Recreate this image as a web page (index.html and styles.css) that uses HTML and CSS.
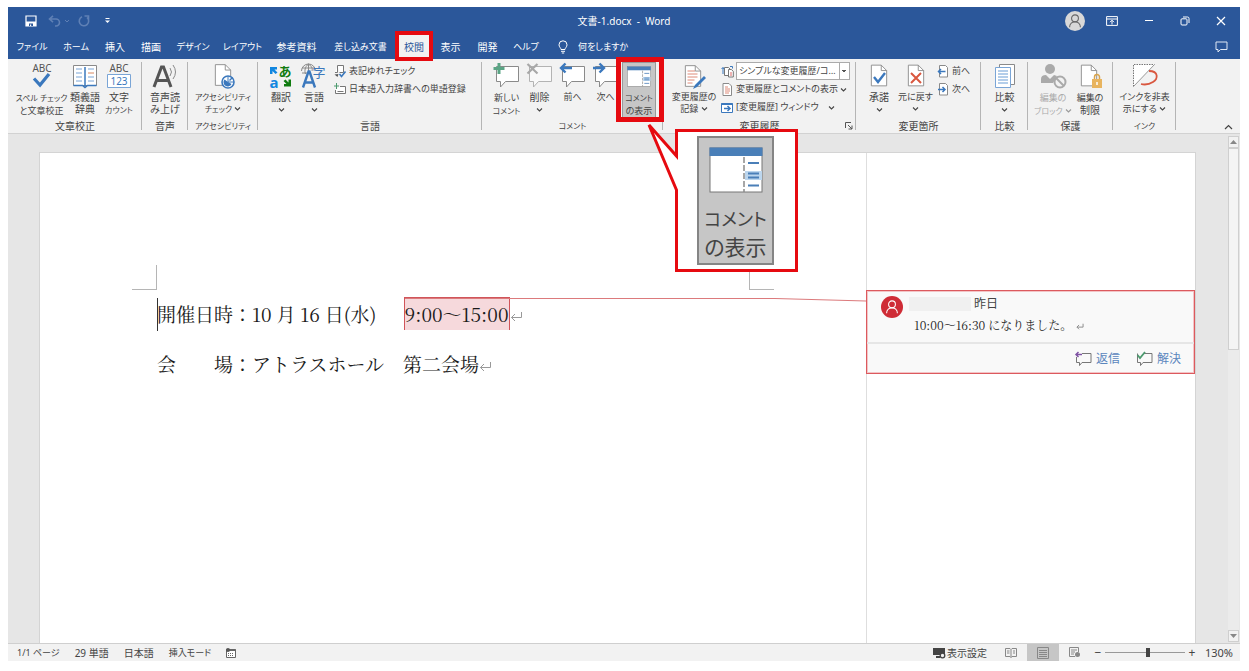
FILE: index.html
```html
<!DOCTYPE html>
<html lang="ja">
<head>
<meta charset="utf-8">
<title>文書-1.docx - Word</title>
<link rel="stylesheet" href="styles.css">
</head>
<body>
<svg class="defs" width="0" height="0" aria-hidden="true">
  <defs>
    <symbol id="chev" viewBox="0 0 7 7"><path d="M1 2.5 3.5 5 6 2.5" fill="none" stroke="#444" stroke-width="1.1"/></symbol>
    <symbol id="page" viewBox="0 0 20 26"><path d="M1.5 1.500h11l6 6v17h-17z" fill="#fff" stroke="#8a8a8a"/><path d="M12.500 1.500v6h6" fill="none" stroke="#8a8a8a"/></symbol>
    <symbol id="bubble" viewBox="0 0 28 28"><path d="M3.500 4.500h22v15h-13l-5 5.500v-5.500h-4z" fill="#fff" stroke="#8a8a8a"/></symbol>
    <symbol id="person" viewBox="0 0 20 20"><circle cx="10" cy="7" r="3.800" fill="none" stroke="currentColor" stroke-width="1.200"/><path d="M4 17c0-8 12-8 12 0" fill="none" stroke="currentColor" stroke-width="1.200"/></symbol>
    <symbol id="pane" viewBox="0 0 54 46"><rect x="1" y="1" width="52" height="44" fill="#fff" stroke="#777"/><path d="M.5.500h53v8.500h-53z" fill="#4a7fb8"/><path d="M35 10v35" stroke="#8a8a8a" stroke-width="1.500" stroke-dasharray="6 2"/><path d="M36 24h17v9h-17z" fill="#bcd6ee"/><path d="M39 16h11M39 26.500h11M39 30.500h11M39 38.500h11" stroke="#4a7fb8" stroke-width="1.800"/></symbol>
  </defs>
</svg>
<div class="window">
  <header class="titlebar">
    <div class="quick">
      <button aria-label="上書き保存"><svg width="12" height="12" viewBox="0 0 12 12"><path d="M1 1h10v10H1z" fill="none" stroke="#fff" stroke-width="1.200"/><path d="M1 6.500h10V11H1z" fill="#fff"/><path d="M4 8.500h4V11H4z" fill="#2b579a"/><path d="M5 9.500h1.200V11H5z" fill="#fff"/></svg></button>
      <button class="dim" aria-label="元に戻す"><svg width="22" height="12" viewBox="0 0 22 12"><path d="M5 .8 1.500 4 5 7.200M2 4h6a3.500 3.500 0 0 1 0 7H7" fill="none" stroke="currentColor" stroke-width="1.600"/><path d="m17 5 2 2 2-2" fill="none" stroke="currentColor"/></svg></button>
      <button class="dim" aria-label="やり直し"><svg width="12" height="12" viewBox="0 0 12 12"><path d="M4 1.800A4.700 4.700 0 1 0 9 2.500M6.500 1h4v4" fill="none" stroke="currentColor" stroke-width="1.600"/></svg></button>
      <button class="more" aria-label="クイック アクセスのカスタマイズ"><svg width="5" height="6" viewBox="0 0 5 6"><path d="M.5.500h4" stroke="#fff"/><path d="M0 2.500h5L2.500 5z" fill="#fff"/></svg></button>
    </div>
    <h1 class="doc-title">文書-1.docx&nbsp; -&nbsp; Word</h1>
    <div class="controls">
      <button class="avatar" aria-label="アカウント"><svg width="18" height="18"><use href="#person"/></svg></button>
      <button aria-label="リボンの表示オプション"><svg width="12" height="10" viewBox="0 0 12 10"><path d="M.6.600h10.800v8.800H.6zM.6 3h10.800" fill="none" stroke="#fff"/><path d="M6 8.500V4.500M4 6.200l2-2 2 2" fill="none" stroke="#fff"/></svg></button>
      <button aria-label="最小化"><svg width="10" height="10" viewBox="0 0 10 10"><path d="M1 4.500h8" stroke="#fff"/></svg></button>
      <button aria-label="元のサイズ"><svg width="10" height="10" viewBox="0 0 10 10"><rect x="1" y="2.800" width="6" height="6.200" rx="1" fill="none" stroke="#fff"/><path d="M3 1h4.500Q9 1 9 2.500V7" fill="none" stroke="#fff"/></svg></button>
      <button aria-label="閉じる"><svg width="10" height="10" viewBox="0 0 10 10"><path d="m1 1 8 8M9 1 1 9" stroke="#fff" stroke-width="1.200"/></svg></button>
    </div>
  </header>
  <nav class="tabs">
    <button class="small">ファイル</button><button class="small">ホーム</button><button>挿入</button><button>描画</button><button class="small">デザイン</button><button class="small">レイアウト</button><button>参考資料</button><button class="small">差し込み文書</button><button class="active">校閲</button><button>表示</button><button>開発</button><button class="small">ヘルプ</button>
    <button class="tell small"><svg width="10" height="14" viewBox="0 0 10 14"><path d="M3 9.500C3 8 1 7 1 4.800a4 4 0 0 1 8 0C9 7 7 8 7 9.500zM3 11.300h4M3.800 13h2.400" fill="none" stroke="#fff"/></svg>何をしますか</button>
    <button class="notes" aria-label="コメント"><svg width="13" height="12" viewBox="0 0 13 12"><path d="M1 1h11v7.500H5.500L3 11V8.500H1z" fill="none" stroke="#dfe8f5"/></svg></button>
  </nav>
  <section class="ribbon" aria-label="校閲">
    <div class="group proof">
      <div class="tools">
        <button class="tool"><svg width="28" height="28" viewBox="0 0 28 28"><text x="14" y="10" text-anchor="middle" class="abc">ABC</text><path d="m6 16.500 6 6.500 9-11" fill="none" stroke="#3b78bd" stroke-width="3.200"/></svg><span><b class="tiny">スペル チェック</b><br><b class="small">と文章校正</b></span></button>
        <button class="tool"><svg width="28" height="28" viewBox="0 0 28 28"><path d="M2.500 3.500h23v20h-23z" fill="#fff" stroke="#8a8a8a"/><path d="M14 5v19.500" stroke="#3b78bd" stroke-width="1.500"/><path d="M2.500 23.500h9l2.500 2 2.500-2h9" fill="none" stroke="#3b78bd" stroke-width="1.500"/><path d="M5 7h6M5 11h6M5 15h6M5 19h6M17 7h6M17 15h6M17 19h6" stroke="#7aa5d6"/><path d="M17 11h6" stroke="#d98860"/></svg><span>類義語<br>辞典</span></button>
        <button class="tool"><svg width="28" height="28" viewBox="0 0 28 28"><text x="14" y="10" text-anchor="middle" class="abc">ABC</text><path d="M2.500 12.500h23v13h-23z" fill="#fff" stroke="#7aa5d6"/><text x="14" y="23" text-anchor="middle" class="num">123</text></svg><span>文字<br><b class="tiny">カウント</b></span></button>
      </div>
      <h2>文章校正</h2>
    </div>
    <div class="group voice">
      <div class="tools">
        <button class="tool"><svg width="28" height="28" viewBox="0 0 28 28"><path d="m3 25 7.500-20h2L20 25M6 18.500h11" fill="none" stroke="#555" stroke-width="3"/><path d="M19 6q3 4 0 8M22 3q5 7 0 14" fill="none" stroke="#8a8a8a"/></svg><span>音声読<br>み上げ</span></button>
      </div>
      <h2>音声</h2>
    </div>
    <div class="group access">
      <div class="tools">
        <button class="tool"><svg width="28" height="28" viewBox="0 0 28 28"><use href="#page" x="5" y="1" width="18" height="24"/><circle cx="19" cy="20" r="6" fill="#fff" stroke="#3b78bd" stroke-width="1.600"/><path d="M19 20V14.500M19 20h5.500" stroke="#3b78bd"/><path d="M15.500 17.500a4.200 4.200 0 1 0 7 4.500L19 20z" fill="#3b78bd"/><path d="m20.500 18.500 3-3" stroke="#3b78bd" stroke-width="1.500"/></svg><span class="tiny">アクセシビリティ<br>チェック <svg class="chev"><use href="#chev"/></svg></span></button>
      </div>
      <h2 class="tiny">アクセシビリティ</h2>
    </div>
    <div class="group lang">
      <div class="tools">
        <button class="tool"><svg width="28" height="28" viewBox="0 0 28 28"><path d="M3 5h7v2.500H7.500l3 3-2 1.500-3-3V12H3z" fill="#1287e0"/><text x="18" y="14" text-anchor="middle" class="kana">あ</text><text x="7" y="26" text-anchor="middle" class="latin">a</text><path d="M24 24.500h-7V22h2.500l-3-3 2-1.500 3 3v-3H24z" fill="#107c10"/></svg><span>翻訳<br><svg class="chev"><use href="#chev"/></svg></span></button>
        <button class="tool"><svg width="28" height="28" viewBox="0 0 28 28"><path d="M1.500 9a7 7 0 0 1 14 0M2 6h13M2 11h6M8.500 2v10M8.500 2c-4 3-4 7-3 10M8.500 2c4 3 4 5 3.500 7" fill="none" stroke="#8a8a8a"/><text x="19" y="15" text-anchor="middle" class="ji">字</text><path d="m3 25.500 5.500-16h1l5.500 16M5 20.500h8" fill="none" stroke="#3b78bd" stroke-width="2.400"/></svg><span>言語<br><svg class="chev"><use href="#chev"/></svg></span></button>
        <div class="list small">
          <button class="row"><svg width="12" height="13" viewBox="0 0 12 13"><path d="M3.500.500h6v7h-4M3.500.500v7H1" fill="#fff" stroke="#777"/><path d="m.5 9.500 3 2.500 1-3z" fill="#555"/><path d="m5.500 9 2 2.500 4-5" fill="none" stroke="#3b78bd" stroke-width="1.600"/></svg>表記ゆれチェック</button>
          <button class="row"><svg width="12" height="13" viewBox="0 0 12 13"><path d="M6 3.500h5.500v7H1.500V7" fill="#fff" stroke="#777"/><path d="M2.500 0v6M0 3h5" stroke="#4c9a6e"/><path d="M3.500 8.500h6" stroke="#777"/></svg>日本語入力辞書への単語登録</button>
        </div>
      </div>
      <h2>言語</h2>
    </div>
    <div class="group comment">
      <div class="tools">
        <button class="tool"><svg width="28" height="28" viewBox="0 0 28 28"><use href="#bubble" width="28" height="28"/><path d="M6 1v11M.5 6.500h11" stroke="#5ba585" stroke-width="3"/></svg><span><b class="small">新しい</b><br><b class="tiny">コメント</b></span></button>
        <button class="tool"><svg width="28" height="28" viewBox="0 0 28 28" opacity=".6"><use href="#bubble" width="28" height="28"/><path d="m1.500 2 10 9.500M11.500 2l-10 9.500" stroke="#777" stroke-width="2.200"/></svg><span>削除<br><svg class="chev"><use href="#chev"/></svg></span></button>
        <button class="tool"><svg width="28" height="28" viewBox="0 0 28 28"><use href="#bubble" width="28" height="28"/><path d="M13 6H2M6.500 1.500 2 6l4.500 4.500" fill="none" stroke="#3b78bd" stroke-width="2.400"/></svg><span class="small">前へ</span></button>
        <button class="tool"><svg width="28" height="28" viewBox="0 0 28 28"><use href="#bubble" width="28" height="28"/><path d="M1 6h11M7.500 1.500 12 6l-4.500 4.500" fill="none" stroke="#3b78bd" stroke-width="2.400"/></svg><span class="small">次へ</span></button>
        <button class="tool pressed" aria-pressed="true"><svg width="28" height="28" viewBox="0 0 28 28"><use href="#pane" x="2" y="4" width="24" height="21"/></svg><span><b class="tiny">コメント</b><br><b class="small">の表示</b></span></button>
      </div>
      <h2 class="tiny">コメント</h2>
    </div>
    <div class="group track">
      <div class="tools">
        <button class="tool"><svg width="28" height="28" viewBox="0 0 28 28"><use href="#page" x="4" y="2" width="18" height="24"/><path d="M7.500 9H15M7.500 12h10M7.500 15h10M7.500 18h7M7.500 21h5" stroke="#de8a78"/><path d="m24 14-9 9-2 4 4-2 9-9z" fill="#3b78bd"/></svg><span class="small">変更履歴の<br>記録 <svg class="chev"><use href="#chev"/></svg></span></button>
        <div class="list small">
          <div class="row"><svg width="13" height="13" viewBox="0 0 13 13"><path d="M3.500 2.500h4l2 2v6h-6z" fill="#fff" stroke="#777"/><path d="M7.500 4.500h3l1.800 2v5.500H7.500z" fill="#fff" stroke="#777"/><path d="M9 8h2M9 10h2" stroke="#d66"/><path d="M2 9V2.500L.5 4M2 2.500 3 4M9 1.500h2.500v2" fill="none" stroke="#3b78bd"/></svg><select class="markup" aria-label="変更内容の表示"><option>シンプルな変更履歴/コ…</option></select></div>
          <button class="row"><svg width="13" height="13" viewBox="0 0 13 13"><path d="M2 .5h6l2.500 2.500v9.500H2z" fill="#fff" stroke="#8a8a8a"/><path d="M4 4h3M4 6h5M4 8h5M4 10h4" stroke="#de8a78"/></svg>変更履歴とコメントの表示 <svg class="chev"><use href="#chev"/></svg></button>
          <button class="row"><svg width="13" height="13" viewBox="0 0 13 13"><path d="M.5 2.500h11v9H.5z" fill="#fff" stroke="#3b78bd"/><path d="M.5 3h11" stroke="#3b78bd" stroke-width="2"/><path d="M3 7.500h6M6.500 5 9 7.500 6.500 10" fill="none" stroke="#3b78bd" stroke-width="1.500"/></svg>[変更履歴] ウィンドウ&nbsp; &nbsp;<svg class="chev"><use href="#chev"/></svg></button>
        </div>
      </div>
      <h2>変更履歴</h2>
      <button class="launcher" aria-label="変更履歴オプション"><svg width="8" height="8" viewBox="0 0 8 8"><path d="M.5 6V.5H6M3 3l4 4M7 3.500V7H3.500" fill="none" stroke="#555"/></svg></button>
    </div>
    <div class="group changes">
      <div class="tools">
        <button class="tool"><svg width="28" height="28" viewBox="0 0 28 28"><use href="#page" x="5" y="1" width="18" height="25"/><path d="m9 15 4 5 7-9" fill="none" stroke="#3b78bd" stroke-width="2.400"/></svg><span>承諾<br><svg class="chev"><use href="#chev"/></svg></span></button>
        <button class="tool"><svg width="28" height="28" viewBox="0 0 28 28"><use href="#page" x="5" y="1" width="18" height="25"/><path d="m9 11 10 10M19 11 9 21" stroke="#d9573f" stroke-width="2"/></svg><span class="small">元に戻す<br><svg class="chev"><use href="#chev"/></svg></span></button>
        <div class="list small">
          <button class="row"><svg width="12" height="13" viewBox="0 0 12 13"><path d="M2.500.500h6l2 2v9.500h-8z" fill="#fff" stroke="#8a8a8a"/><path d="M8.500 6.500H1.500M4 4 1.500 6.500 4 9" fill="none" stroke="#3b78bd" stroke-width="1.500"/></svg>前へ</button>
          <button class="row"><svg width="12" height="13" viewBox="0 0 12 13"><path d="M2.500.500h6l2 2v9.500h-8z" fill="#fff" stroke="#8a8a8a"/><path d="M1 6.500h7M5.500 4 8 6.500 5.500 9" fill="none" stroke="#3b78bd" stroke-width="1.500"/></svg>次へ</button>
        </div>
      </div>
      <h2>変更箇所</h2>
    </div>
    <div class="group compare">
      <div class="tools">
        <button class="tool"><svg width="28" height="28" viewBox="0 0 28 28"><path d="M8.500 2.500h15v20h-15z" fill="#fff" stroke="#8a8a8a"/><path d="M4.500 5.500h15v20h-15z" fill="#fff" stroke="#7aa5d6"/><path d="M7 9h10M7 12h10M7 15h10M7 18h10M7 21h10" stroke="#9cbfe3" stroke-width="1.300"/></svg><span>比較<br><svg class="chev"><use href="#chev"/></svg></span></button>
      </div>
      <h2>比較</h2>
    </div>
    <div class="group protect">
      <div class="tools">
        <button class="tool" disabled><svg width="28" height="28" viewBox="0 0 28 28"><circle cx="11" cy="7" r="5" fill="#aaa"/><path d="M2 21v-4q0-4 5-4l4 4 4-4 3 1-4 7z" fill="#aaa"/><circle cx="21" cy="20" r="5.500" fill="#f2f2f2" stroke="#aaa" stroke-width="2"/><path d="m17 16 8 8" stroke="#aaa" stroke-width="2"/></svg><span><b class="small">編集の</b><br><b class="tiny">ブロック <svg class="chev"><use href="#chev"/></svg></b></span></button>
        <button class="tool"><svg width="28" height="28" viewBox="0 0 28 28"><use href="#page" x="4" y="1" width="18" height="25"/><path d="M18.500 18v-3a2.500 2.500 0 0 1 5 0v3" fill="none" stroke="#d9a44c" stroke-width="1.500"/><path d="M16 17h10v9H16z" fill="#e8b45f"/><path d="M21 20v3" stroke="#fff" stroke-width="1.500"/></svg><span><b class="small">編集の</b><br>制限</span></button>
      </div>
      <h2>保護</h2>
    </div>
    <div class="group ink">
      <div class="tools">
        <button class="tool"><svg width="28" height="28" viewBox="0 0 28 28"><path d="M2.500 2.500v22l21-22z" fill="#fff"/><path d="M2.500 24.500V2.500h21" fill="none" stroke="#777" stroke-dasharray="1.500 1"/><path d="m2.500 24.500 21-22" stroke="#999"/><path d="M18 9c10 0 9 8 4 11-4 2.500-8 3-12 2" fill="none" stroke="#d9573f" stroke-width="1.800"/></svg><span class="small">インクを非表<br>示にする <svg class="chev"><use href="#chev"/></svg></span></button>
      </div>
      <h2 class="tiny">インク</h2>
    </div>
    <button class="collapse" aria-label="リボンを折りたたむ"><svg width="9" height="6" viewBox="0 0 9 6"><path d="m1 5 3.500-3.500L8 5" fill="none" stroke="#444" stroke-width="1.200"/></svg></button>
  </section>
  <main class="workspace">
    <article class="sheet">
      <div class="page">
        <div class="text-area">
          <i class="crop crop-left"></i><i class="crop crop-right"></i>
          <p><span class="caret"></span>開催日時：10 月 16 日(水)　<mark>9:00～15:00</mark><svg class="ret" width="13" height="11" viewBox="0 0 13 11"><path d="M11.500 1v5.500H1.500M5 3 1.500 6.500 5 10" fill="none" stroke="#999"/></svg></p>
          <p>会　　場：アトラスホール　第二会場<svg class="ret" width="13" height="11" viewBox="0 0 13 11"><path d="M11.500 1v5.500H1.500M5 3 1.500 6.500 5 10" fill="none" stroke="#999"/></svg></p>
        </div>
        <svg class="leader" viewBox="0 0 461 4" preserveAspectRatio="none"><path d="M0 .5h370L461 3" fill="none" stroke="#dc7a7c"/></svg>
      </div>
      <aside class="margin">
        <section class="card">
          <div class="card-body">
            <span class="face"><svg width="18" height="18"><use href="#person"/></svg></span>
            <div class="message">
              <div class="meta"><span class="hidden-name"></span><time>昨日</time></div>
              <div class="quote">10:00～16:30 になりました。<svg class="ret" width="8" height="7" viewBox="0 0 13 11"><path d="M11.500 1v5.500H1.500M5 3 1.500 6.500 5 10" fill="none" stroke="#888" stroke-width="1.500"/></svg></div>
            </div>
          </div>
          <div class="card-actions">
            <button><svg width="17" height="15" viewBox="0 0 17 15"><path d="M7 2.500h9v9H7l-2.500 3v-3h-3V6" fill="none" stroke="#777"/><path d="M7 3.500H1M3.500 1 1 3.500 3.500 6" fill="none" stroke="#8054a4" stroke-width="1.500"/></svg>返信</button>
            <button><svg width="17" height="15" viewBox="0 0 17 15"><path d="M8 2.500h8v9H7l-2.500 3v-3h-3v-9" fill="none" stroke="#777"/><path d="m1.500 4 2.500 3 5-6" fill="none" stroke="#4c9a6e" stroke-width="1.800"/></svg>解決</button>
          </div>
        </section>
      </aside>
    </article>
    <div class="scrollbar">
      <button aria-label="上へスクロール"><svg width="7" height="4" viewBox="0 0 7 4"><path d="M0 4h7L3.500 0z" fill="#888"/></svg></button>
      <div class="track-v"><div class="thumb"></div></div>
      <button aria-label="下へスクロール"><svg width="7" height="4" viewBox="0 0 7 4"><path d="M0 0h7L3.500 4z" fill="#888"/></svg></button>
    </div>
  </main>
  <footer class="status">
    <span class="small">1/1 ページ</span><span>29 単語</span><span>日本語</span><span class="small">挿入モード</span>
    <svg width="10" height="10" viewBox="0 0 10 10"><path d="M.5 1.500h9v8h-9z" fill="#fff" stroke="#666"/><path d="M.5 2h9" stroke="#666" stroke-width="2"/><path d="M2 5.500h6M2 7.500h6" stroke="#666" stroke-dasharray="1 1"/><circle cx="2" cy="2" r="2" fill="#555"/></svg>
    <div class="view">
      <button class="display"><svg width="13" height="12" viewBox="0 0 13 12"><path d="M0 1h12v7H0zM3 9h4v2H3z" fill="#444"/><circle cx="9.500" cy="8.500" r="2.300" fill="#f2f2f2" stroke="#444" stroke-width="1.300"/></svg>表示設定</button>
      <button class="mode" aria-label="閲覧モード"><svg width="12" height="11" viewBox="0 0 12 11"><path d="M.5 1.500h4.500l1 1 1-1h4.500v8H7l-1 1-1-1H.5zM6 2.500v8M2 4h2.500M2 6h2.500M8 4h2M8 6h2" fill="none" stroke="#888"/></svg></button>
      <button class="mode on" aria-label="印刷レイアウト"><svg width="12" height="12" viewBox="0 0 12 12"><path d="M.5.500h11v11H.5zM2 3.500h8M2 5.500h8M2 7.500h8M2 9.500h8" fill="none" stroke="#888"/></svg></button>
      <button class="mode" aria-label="Web レイアウト"><svg width="12" height="11" viewBox="0 0 12 11"><path d="M6 9.500H.5v-9h9V5M2 3h6M2 5h4M2 7h3" fill="none" stroke="#888"/><circle cx="8.500" cy="7.500" r="2.500" fill="#888"/></svg></button>
      <button class="zoom-step" aria-label="縮小">−</button>
      <input type="range" class="zoom" min="10" max="250" value="138" aria-label="ズーム">
      <button class="zoom-step" aria-label="拡大">+</button>
      <span class="percent">130%</span>
    </div>
  </footer>
  <div class="callout">
    <svg class="callout-shape" width="150" height="149" viewBox="0 0 150 149"><path d="M28.500 6.500h120v140h-120V66L1 1l27.500 31z" fill="#fff" stroke="#e60a10" stroke-width="3"/></svg>
    <div class="magnified"><svg width="54" height="46"><use href="#pane"/></svg><span><b class="kana-line">コメント</b><br>の表示</span></div>
  </div>
</div>
</body>
</html>
```
FILE: styles.css
```css
* { box-sizing: border-box; }
body {
  margin: 0;
  min-height: 100vh;
  padding: 7px 9px 10px 8px;
  display: flex;
  background: #fff;
  color: #444;
  font: 10px/12px "Noto Sans", "Noto Sans CJK JP", sans-serif;
  font-feature-settings: "palt";
}
.defs { position: absolute; }
button, select, input {
  margin: 0;
  padding: 0;
  border: 0;
  background: none;
  color: inherit;
  font: inherit;
  font-feature-settings: inherit;
}
h1, h2, p { margin: 0; font-weight: 400; font-size: inherit; }
b { font-weight: inherit; }
.small { font-size: 9px; }
.tiny { font-size: 8px; }
svg { display: block; flex: none; overflow: visible; }
.window { flex: 1; min-width: 0; display: flex; flex-direction: column; position: relative; }

.titlebar {
  display: grid;
  grid-template-columns: 1fr auto 1fr;
  align-items: center;
  height: 27px;
  background: #2b579a;
  color: #fff;
}
.quick { display: flex; align-items: center; gap: 11px; padding-left: 17px; }
.quick .dim { color: #5f80b5; }
.quick .dim + .dim { margin-left: -3px; }
.quick .more { margin-left: 4px; }
.doc-title { font-size: 10px; line-height: 16px; }
.controls { display: flex; justify-content: flex-end; align-items: center; gap: 26px; padding-right: 14px; }
.avatar {
  width: 20px;
  height: 20px;
  margin-right: -5px;
  display: grid;
  place-items: center;
  border-radius: 50%;
  background: #d8d8d8;
  color: #666;
}

.tabs {
  display: grid;
  grid-template-columns: 46px 42px 36px 36px 48px 51px 57px 71px 36px 37px 37px 40px 1fr 38px;
  height: 25px;
  padding-left: 1px;
  background: #2b579a;
  color: #fff;
}
.tabs button { white-space: nowrap; }
.tabs .active { position: relative; background: #f2f2f2; color: #2b579a; }
.tabs .active::after {
  content: "";
  position: absolute;
  inset: -3px -1px -2px;
  border: 4px solid #e60a10;
}
.tabs .tell { display: flex; align-items: center; gap: 10px; padding-left: 12px; }
.tabs .notes { display: grid; place-items: center; }

.ribbon { display: flex; height: 75px; background: #f2f2f2; border-bottom: 1px solid #d2d2d2; }
.group {
  position: relative;
  display: flex;
  flex-direction: column;
  justify-content: space-between;
  padding-top: 3px;
}
.group::after {
  content: "";
  position: absolute;
  right: 0;
  top: 3px;
  bottom: 3px;
  border-right: 1px solid #b5b5b5;
}
.group h2 { text-align: center; white-space: nowrap; line-height: 14px; }
.tools { display: grid; justify-content: start; height: 56px; }
.tool {
  display: flex;
  flex-direction: column;
  align-items: center;
  white-space: nowrap;
  line-height: 12px;
}
.tool span { display: block; margin: 1px -9px 0; }
.tool:disabled { color: #aaa; }
.tool:disabled .chev { opacity: 0.5; }
.chev { display: inline-block; width: 7px; height: 7px; }
.list { display: grid; grid-template-rows: 18px 18px 18px; }
.row { display: flex; align-items: center; gap: 3px; white-space: nowrap; }
.proof { width: 134px; }
.proof .tools { grid-template-columns: 55px 32px 36px; padding-left: 6px; }
.voice { width: 46px; }
.voice .tools, .access .tools, .compare .tools, .ink .tools { grid-template-columns: 1fr; justify-content: stretch; }
.access { width: 70px; }
.lang { width: 224px; }
.lang .tools { grid-template-columns: 34px 32px auto; padding-left: 6px; }
.lang .list { padding-left: 4px; }
.comment { width: 181px; }
.comment .tools { grid-template-columns: repeat(4, 33px) 34px; padding-left: 8px; }
.pressed { position: relative; z-index: 2; background: #c6c6c6; box-shadow: inset 0 0 0 1px #999; }
.pressed::after {
  content: "";
  position: absolute;
  inset: -5px -8px -4px -6px;
  border: 5px solid #e60a10;
}
.track { width: 193px; }
.track .tools { grid-template-columns: 50px auto; padding-left: 6px; }
.track .list { padding-left: 2px; }
.track .list .row { gap: 2px; }
.markup {
  appearance: none;
  width: 114px;
  height: 18px;
  padding-left: 2px;
  border: 1px solid #ababab;
  background:
    conic-gradient(from 315deg at 50% 100%, #555 90deg, transparent 0) right 3px center / 4px 2px no-repeat,
    linear-gradient(#ababab, #ababab) right 9px center / 1px 100% no-repeat,
    #fff;
}
.launcher { position: absolute; right: 3px; bottom: 3px; }
.changes { width: 125px; }
.changes .tools { grid-template-columns: 38px 35px auto; padding-left: 4px; }
.changes .list { padding-left: 4px; }
.compare { width: 47px; }
.protect { width: 85px; }
.protect .tools { grid-template-columns: 38px 36px; padding-left: 6px; }
.ink { width: 63px; }
.collapse { margin: auto 7px 3px auto; }

.workspace { flex: 1; display: flex; padding-left: 31px; background: #e6e6e6; overflow: hidden; }
.sheet { flex: 1; display: flex; margin-top: 18px; background: #fff; border: 1px solid #d4d4d4; border-bottom: 0; }
.page { flex: 1; position: relative; padding: 136px 117px 0; }
.text-area {
  position: relative;
  color: #1a1a1a;
  font: 19px/50px "Noto Serif CJK JP", "Liberation Serif", serif;
  font-feature-settings: normal;
}
.text-area p { position: relative; white-space: nowrap; }
.ret { display: inline-block; }
mark {
  display: inline-block;
  margin-left: 8px;
  line-height: 32px;
  color: inherit;
  background: #f6d9dc;
  border: solid #d0555a;
  border-width: 1px 1px 0;
}
.caret { position: absolute; left: 0; top: 9px; height: 33px; border-left: 1px solid #333; }
.crop { position: absolute; width: 25px; height: 25px; top: -24px; border-bottom: 1px solid #b5b5b5; }
.crop-left { left: -25px; border-right: 1px solid #b5b5b5; }
.crop-right { right: -25px; border-left: 1px solid #b5b5b5; }
.leader { position: absolute; left: 365px; right: 0; top: 145px; width: calc(100% - 365px); height: 4px; }
.margin { width: 329px; padding-top: 137px; border-left: 1px solid #dedede; }
.card { margin-left: -1px; background: #f9f9f9; border: 1px solid #dc5a5e; box-shadow: inset 0 0 0 1px #f3c4c6; }
.card-body { display: flex; gap: 6px; height: 53px; padding: 5px 14px 0; border-bottom: 2px solid #e6e6e6; }
.face {
  width: 22px;
  height: 22px;
  display: grid;
  place-items: center;
  border-radius: 50%;
  background: #cf2c36;
  color: #fff;
}
.meta { display: flex; align-items: center; gap: 3px; height: 16px; font-size: 12px; }
.hidden-name { width: 62px; height: 14px; background: #f0f0f0; }
.quote {
  padding: 3px 0 0 5px;
  color: #222;
  font: 12px/20px "Noto Serif CJK JP", "Liberation Serif", serif;
  font-feature-settings: normal;
  white-space: nowrap;
}
.quote .ret { margin-left: 4px; }
.card-actions { display: flex; justify-content: flex-end; gap: 16px; height: 29px; padding-right: 13px; }
.card-actions button { display: flex; align-items: center; gap: 4px; color: #5b86bd; font-size: 12px; }

.scrollbar { display: flex; flex-direction: column; width: 13px; margin-left: 31px; padding: 2px 1px 1px; }
.scrollbar button { display: grid; place-items: center; height: 12px; border: 1px solid #cfcfcf; background: #f2f2f2; }
.track-v { flex: 1; background: #ebebeb; }
.thumb { height: 42%; border: 1px solid #cfcfcf; background: #f4f4f4; }

.status {
  display: flex;
  align-items: center;
  gap: 15px;
  height: 18px;
  padding-left: 9px;
  border-top: 1px solid #cfcfcf;
  background: #f2f2f2;
}
.view { display: flex; align-items: center; align-self: stretch; margin-left: auto; padding-right: 7px; }
.display { display: flex; align-items: center; gap: 1px; margin-right: 8px; }
.mode { width: 32px; align-self: stretch; display: grid; place-items: center; }
.mode.on { background: #c6c6c6; }
.zoom-step { width: 14px; font-size: 12px; }
.zoom { appearance: none; width: 80px; height: 12px; background: linear-gradient(#999, #999) center / 100% 1px no-repeat; }
.zoom::-webkit-slider-thumb { appearance: none; width: 4px; height: 9px; background: #444; }
.percent { margin-left: 6px; font-size: 11px; }

.callout { position: absolute; left: 640px; top: 117px; width: 150px; height: 149px; padding: 12px 24px 7px 49px; }
.callout-shape { position: absolute; left: 0; top: 0; }
.magnified {
  position: relative;
  display: flex;
  flex-direction: column;
  align-items: center;
  gap: 11px;
  height: 129px;
  padding-top: 9px;
  border: 2px solid #858585;
  background: #c6c6c6;
  font-size: 21px;
  line-height: 28px;
  text-align: center;
  white-space: nowrap;
}
.kana-line { font-size: 18px; }
.abc { font: 10px "Noto Sans", sans-serif; fill: #555; }
.num { font: 10px "Noto Sans", sans-serif; fill: #3b78bd; }
.kana { font: bold 13px "Noto Sans CJK JP", sans-serif; fill: #107c10; }
.latin { font: bold 15px "Noto Sans", sans-serif; fill: #1287e0; }
.ji { font: 13px "Noto Sans CJK JP", sans-serif; fill: #3b78bd; }
```
